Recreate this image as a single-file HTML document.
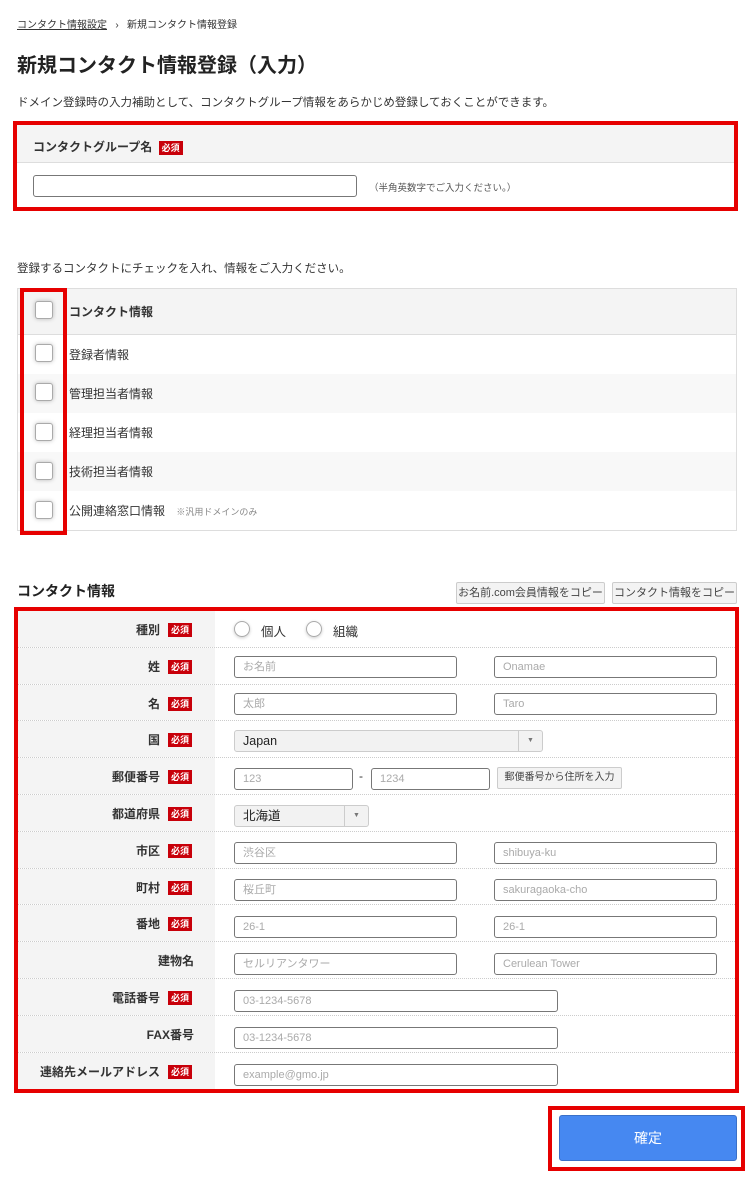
<!DOCTYPE html>
<html><head><meta charset="utf-8"><style>
*{box-sizing:border-box;margin:0;padding:0}
body{width:752px;height:1179px;background:#fff;font-family:"Liberation Sans","Noto Sans CJK JP",sans-serif;color:#333;position:relative;overflow:hidden}
.a{position:absolute}
.req{display:inline-block;background:#c8000a;color:#fff;font-size:9px;font-weight:bold;padding:0 3px;line-height:14px;height:14px}
.inp{position:absolute;border:1px solid #777;border-radius:3px;background:#fff;height:22px;font-size:11px;color:#aaa;padding-left:8px;line-height:20px}
.cb{position:absolute;left:35px;width:18px;height:18px;border:1px solid #aaa;border-radius:3px;background:#fff;box-shadow:0 0 4px rgba(0,0,0,.25)}
.row{position:absolute;left:18px;width:717px;height:36.8px;border-bottom:1px dotted #ccc}
.row .lab{position:absolute;left:0;top:0;width:197px;height:100%;background:#f4f4f4}
.row .lt{position:absolute;right:55px;top:1px;line-height:36px;font-size:12px;font-weight:bold;color:#333;white-space:nowrap}
.row .lt.nr{right:21px}
.row .req{position:absolute;left:150px;top:12px}
.sel{position:absolute;border:1px solid #ccc;border-radius:3px;background:#f2f2f2;height:22px;font-size:12.5px;color:#222;padding-left:8px;line-height:20px}
.sel .ar{position:absolute;right:0;top:0;width:24px;height:20px;border-left:1px solid #ccc;font-size:7px;color:#777;text-align:center;line-height:20px}
.btn{position:absolute;border:1px solid #ccc;border-radius:2px;background:#f3f3f3;font-size:11px;color:#444;text-align:center;line-height:20px;height:22px}
</style></head><body>
<div class="a" style="left:17px;top:16px;font-size:10px;color:#333"><span style="text-decoration:underline">コンタクト情報設定</span>&nbsp;&nbsp; ›&nbsp;&nbsp; 新規コンタクト情報登録</div>
<div class="a" style="left:17px;top:49px;font-size:20px;font-weight:bold;color:#222">新規コンタクト情報登録（入力）</div>
<div class="a" style="left:17px;top:94px;font-size:11.5px;color:#333">ドメイン登録時の入力補助として、コンタクトグループ情報をあらかじめ登録しておくことができます。</div>

<div class="a" style="left:13px;top:121px;width:725px;height:90px;border:4px solid #e60000;background:#fff">
 <div class="a" style="left:0;top:0;width:717px;height:38px;background:#f4f4f4;border-bottom:1px solid #ddd"></div>
 <div class="a" style="left:16px;top:13px;font-size:12px;font-weight:bold;color:#333">コンタクトグループ名 <span class="req" style="margin-left:3px">必須</span></div>
 <div class="inp" style="left:16px;top:50px;width:324px;height:22px"></div>
 <div class="a" style="left:352px;top:55px;font-size:9.5px;color:#555">（半角英数字でご入力ください。）</div>
</div>

<div class="a" style="left:17px;top:260px;font-size:11.5px;color:#333">登録するコンタクトにチェックを入れ、情報をご入力ください。</div>
<div class="a" style="left:17px;top:288px;width:720px;height:243px;border:1px solid #ddd">
 <div class="a" style="left:0;top:0;width:718px;height:46px;background:#f4f4f4;border-bottom:1px solid #ddd"></div>
 <div class="a" style="left:0;top:85px;width:718px;height:39px;background:#f8f8f8"></div>
 <div class="a" style="left:0;top:163px;width:718px;height:39px;background:#f8f8f8"></div>
</div>
<div class="a" style="left:69px;top:303px;font-size:12px;font-weight:bold">コンタクト情報</div>
<div class="a" style="left:69px;top:346px;font-size:12px">登録者情報</div>
<div class="a" style="left:69px;top:385px;font-size:12px">管理担当者情報</div>
<div class="a" style="left:69px;top:424px;font-size:12px">経理担当者情報</div>
<div class="a" style="left:69px;top:463px;font-size:12px">技術担当者情報</div>
<div class="a" style="left:69px;top:502px;font-size:12px">公開連絡窓口情報 <span style="font-size:9px;color:#888;margin-left:8px">※汎用ドメインのみ</span></div>
<div class="cb" style="top:301px"></div><div class="cb" style="top:344px"></div><div class="cb" style="top:383px"></div><div class="cb" style="top:423px"></div><div class="cb" style="top:462px"></div><div class="cb" style="top:501px"></div>
<div class="a" style="left:20px;top:288px;width:47px;height:247px;border:4px solid #e60000"></div>

<div class="a" style="left:17px;top:581px;font-size:14px;font-weight:bold;color:#222">コンタクト情報</div>
<div class="btn" style="left:456px;top:582px;width:149px">お名前.com会員情報をコピー</div>
<div class="btn" style="left:612px;top:582px;width:125px">コンタクト情報をコピー</div>

<div class="a" style="left:14px;top:607px;width:725px;height:486px;border:4px solid #e60000"></div>
<div class="row" style="top:611px"><div class="lab"><span class="lt">種別</span><span class="req">必須</span></div></div>
<div class="row" style="top:647.8px"><div class="lab"><span class="lt">姓</span><span class="req">必須</span></div></div>
<div class="row" style="top:684.6px"><div class="lab"><span class="lt">名</span><span class="req">必須</span></div></div>
<div class="row" style="top:721.4px"><div class="lab"><span class="lt">国</span><span class="req">必須</span></div></div>
<div class="row" style="top:758.2px"><div class="lab"><span class="lt">郵便番号</span><span class="req">必須</span></div></div>
<div class="row" style="top:795px"><div class="lab"><span class="lt">都道府県</span><span class="req">必須</span></div></div>
<div class="row" style="top:831.8px"><div class="lab"><span class="lt">市区</span><span class="req">必須</span></div></div>
<div class="row" style="top:868.6px"><div class="lab"><span class="lt">町村</span><span class="req">必須</span></div></div>
<div class="row" style="top:905.4px"><div class="lab"><span class="lt">番地</span><span class="req">必須</span></div></div>
<div class="row" style="top:942.2px"><div class="lab"><span class="lt nr">建物名</span></div></div>
<div class="row" style="top:979px"><div class="lab"><span class="lt">電話番号</span><span class="req">必須</span></div></div>
<div class="row" style="top:1015.8px"><div class="lab"><span class="lt nr">FAX番号</span></div></div>
<div class="row" style="top:1052.6px;border:none"><div class="lab"><span class="lt">連絡先メールアドレス</span><span class="req">必須</span></div></div>

<div class="a" style="left:234px;top:621px;width:16px;height:16px;border:1px solid #aaa;border-radius:50%;box-shadow:0 1px 3px rgba(0,0,0,.2)"></div>
<div class="a" style="left:261px;top:621px;font-size:12.5px">個人</div>
<div class="a" style="left:306px;top:621px;width:16px;height:16px;border:1px solid #aaa;border-radius:50%;box-shadow:0 1px 3px rgba(0,0,0,.2)"></div>
<div class="a" style="left:333px;top:621px;font-size:12.5px">組織</div>

<div class="inp" style="left:234px;top:656px;width:223px">お名前</div>
<div class="inp" style="left:494px;top:656px;width:223px">Onamae</div>
<div class="inp" style="left:234px;top:693px;width:223px">太郎</div>
<div class="inp" style="left:494px;top:693px;width:223px">Taro</div>
<div class="sel" style="left:234px;top:730px;width:309px">Japan<span class="ar">▼</span></div>
<div class="inp" style="left:234px;top:768px;width:119px">123</div>
<div class="a" style="left:359px;top:769px;font-size:12px">-</div>
<div class="inp" style="left:371px;top:768px;width:119px">1234</div>
<div class="btn" style="left:497px;top:767px;width:125px;font-size:10px">郵便番号から住所を入力</div>
<div class="sel" style="left:234px;top:805px;width:135px">北海道<span class="ar">▼</span></div>
<div class="inp" style="left:234px;top:842px;width:223px">渋谷区</div>
<div class="inp" style="left:494px;top:842px;width:223px">shibuya-ku</div>
<div class="inp" style="left:234px;top:879px;width:223px">桜丘町</div>
<div class="inp" style="left:494px;top:879px;width:223px">sakuragaoka-cho</div>
<div class="inp" style="left:234px;top:916px;width:223px">26-1</div>
<div class="inp" style="left:494px;top:916px;width:223px">26-1</div>
<div class="inp" style="left:234px;top:953px;width:223px">セルリアンタワー</div>
<div class="inp" style="left:494px;top:953px;width:223px">Cerulean Tower</div>
<div class="inp" style="left:234px;top:990px;width:324px">03-1234-5678</div>
<div class="inp" style="left:234px;top:1027px;width:324px">03-1234-5678</div>
<div class="inp" style="left:234px;top:1064px;width:324px">example@gmo.jp</div>

<div class="a" style="left:548px;top:1106px;width:197px;height:65px;border:4px solid #e60000"></div>
<div class="a" style="left:559px;top:1115px;width:178px;height:46px;background:#4688f1;border:1px solid #3a70c8;border-radius:3px;color:#fff;font-size:14px;text-align:center;line-height:44px">確定</div>
</body></html>
